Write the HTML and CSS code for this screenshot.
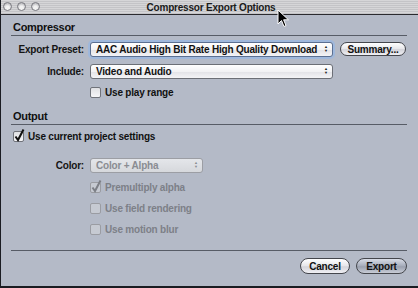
FILE: index.html
```html
<!DOCTYPE html>
<html>
<head>
<meta charset="utf-8">
<link rel="stylesheet" href="styles.css">
</head>
<body>
<div class="win">
  <div class="titlebar">
    <div class="lights"><span class="light"></span><span class="light"></span><span class="light"></span></div>
    <div class="title">Compressor Export Options</div>
  </div>
  <div class="content">
    <div class="heading">Compressor</div>
    <div class="sep"></div>
    <div class="row row-preset">
      <div class="lbl">Export Preset:</div>
      <div class="popup focus wide"><span class="ptext">AAC Audio High Bit Rate High Quality Download</span><span class="arrows">&#9650;<br>&#9660;</span></div>
      <div class="btn summary">Summary...</div>
    </div>
    <div class="row row-include">
      <div class="lbl">Include:</div>
      <div class="popup wide"><span class="ptext">Video and Audio</span><span class="arrows">&#9650;<br>&#9660;</span></div>
    </div>
    <div class="check indent row-play"><span class="box"></span><span>Use play range</span></div>

    <div class="heading out">Output</div>
    <div class="sep"></div>
    <div class="check row-current"><span class="box"><svg class="tick" width="12" height="13" viewBox="0 0 12 13"><path d="M2.5 7.5 L5 11 L10.5 0.5" fill="none" stroke="#111" stroke-width="2"/></svg></span><span>Use current project settings</span></div>
    <div class="row row-color disabled">
      <div class="lbl">Color:</div>
      <div class="popup narrow"><span class="ptext">Color + Alpha</span><span class="arrows">&#9650;<br>&#9660;</span></div>
    </div>
    <div class="check indent disabled row-pre"><span class="box"><svg class="tick" width="12" height="13" viewBox="0 0 12 13"><path d="M2.5 7.5 L5 11 L10.5 0.5" fill="none" stroke="#7c7f86" stroke-width="2"/></svg></span><span>Premultiply alpha</span></div>
    <div class="check indent disabled row-sub"><span class="box"></span><span>Use field rendering</span></div>
    <div class="check indent disabled row-sub"><span class="box"></span><span>Use motion blur</span></div>
    <div class="sep bottom"></div>
    <div class="actions">
      <div class="btn cancel">Cancel</div>
      <div class="btn default">Export</div>
    </div>
  </div>
  <svg class="cursor" width="13" height="20" viewBox="0 0 13 20"><path d="M1 1 L1 15 L4.5 11.5 L7 17.5 L9 16.5 L6.6 10.8 L11.5 10.8 Z" fill="#000" stroke="#fff" stroke-width="1"/></svg>
</div>
</body>
</html>
```

FILE: styles.css
```css
* { box-sizing: border-box; }
html, body { margin: 0; padding: 0; }
body {
  width: 418px;
  height: 288px;
  overflow: hidden;
  background: #1a1c22;
  font-family: "Liberation Sans", Arial, sans-serif;
  font-weight: bold;
  font-size: 10px;
  letter-spacing: -0.2px;
  color: #111;
  white-space: nowrap;
}
.win {
  position: relative;
  width: 418px;
  height: 286px;
  margin-left: 1px;
  background: #b4bac7;
  display: flex;
  flex-direction: column;
}
.titlebar {
  height: 15px;
  flex: none;
  position: relative;
  background: repeating-linear-gradient(#d6d6d8 0 1px, #c4c4c7 1px 2px);
  border-bottom: 1px solid #2a2a2e;
  display: flex;
  align-items: center;
  justify-content: center;
}
.lights {
  position: absolute;
  left: 2px;
  top: 2px;
  display: flex;
  gap: 5px;
}
.light {
  width: 9px;
  height: 9px;
  border-radius: 50%;
  background: radial-gradient(circle at 50% 70%, #f2f2f2 0 30%, #b8b8bc 80%);
  border: 1px solid #7a7a80;
}
.title {
  font-size: 10px;
  color: #1a1a1a;
  padding-left: 2px;
}
.content {
  flex: 1;
  padding: 5px 12px 0 10px;
  display: flex;
  flex-direction: column;
}
.heading {
  font-size: 11px;
  letter-spacing: -0.3px;
  color: #101010;
  padding-left: 2px;
  height: 14px;
  line-height: 14px;
}
.heading.out { margin-top: 11px; }
.sep {
  height: 1px;
  flex: none;
  background: #575c66;
  margin-top: 1px;
}
.row {
  display: flex;
  align-items: center;
  height: 16px;
  flex: none;
}
.row-preset { margin-top: 5px; }
.row-include { margin-top: 6px; }
.lbl {
  width: 73px;
  text-align: right;
  margin-right: 6px;
  color: #141414;
}
.popup {
  height: 15px;
  border: 1px solid #6c6f76;
  border-radius: 3px;
  background: linear-gradient(#ffffff, #f2f2f4 50%, #e2e2e6 51%, #f4f4f6);
  display: flex;
  align-items: center;
  justify-content: space-between;
  padding: 0 4px 0 5px;
}
.popup.wide { width: 243px; }
.popup.narrow { width: 113px; }
.popup.focus {
  box-shadow: 0 0 0 2px #9fb8dc;
  border-color: #5a6f92;
}
.arrows {
  font-size: 4px;
  line-height: 4px;
  letter-spacing: 0;
  text-align: center;
  color: #222;
}
.btn {
  height: 14px;
  border: 1px solid #44464c;
  border-radius: 8px;
  background: linear-gradient(#ffffff, #e6e6ea 50%, #d4d4da 55%, #f0f0f4);
  display: flex;
  align-items: center;
  justify-content: center;
  color: #111;
}
.summary { width: 66px; margin-left: 7px; }
.check {
  display: flex;
  align-items: center;
  gap: 4px;
  height: 12px;
  flex: none;
}
.check.indent { margin-left: 79px; }
.box {
  position: relative;
  width: 11px;
  height: 11px;
  border: 1px solid #70737a;
  border-radius: 2px;
  background: linear-gradient(#dfe0e3, #f6f6f8);
}
.tick {
  position: absolute;
  left: -1px;
  top: -3px;
}
.row-play { margin-top: 7px; }
.row-current { margin-top: 5px; margin-left: 2px; }
.row-color { margin-top: 15px; }
.row-pre { margin-top: 8px; }
.row-sub { margin-top: 9px; }
.disabled { color: #7d8088; }
.disabled .lbl { color: #141414; }
.disabled .popup { color: #8a8c92; border-color: #9c9ea4; background: linear-gradient(#e4e6ea, #d6d8dc); }
.disabled .arrows { color: #8a8c92; }
.disabled .box { border-color: #9a9ca2; background: #c6cad2; }
.sep.bottom { margin-top: 15px; }
.actions {
  display: flex;
  justify-content: flex-end;
  gap: 6px;
  margin-top: 7px;
}
.cancel { width: 50px; height: 16px; }
.default {
  width: 51px;
  height: 16px;
  background: linear-gradient(#d8dce6, #a6acba 50%, #9aa0ae 55%, #c8ccd6);
}
.cursor {
  position: absolute;
  left: 276px;
  top: 9px;
}
```
